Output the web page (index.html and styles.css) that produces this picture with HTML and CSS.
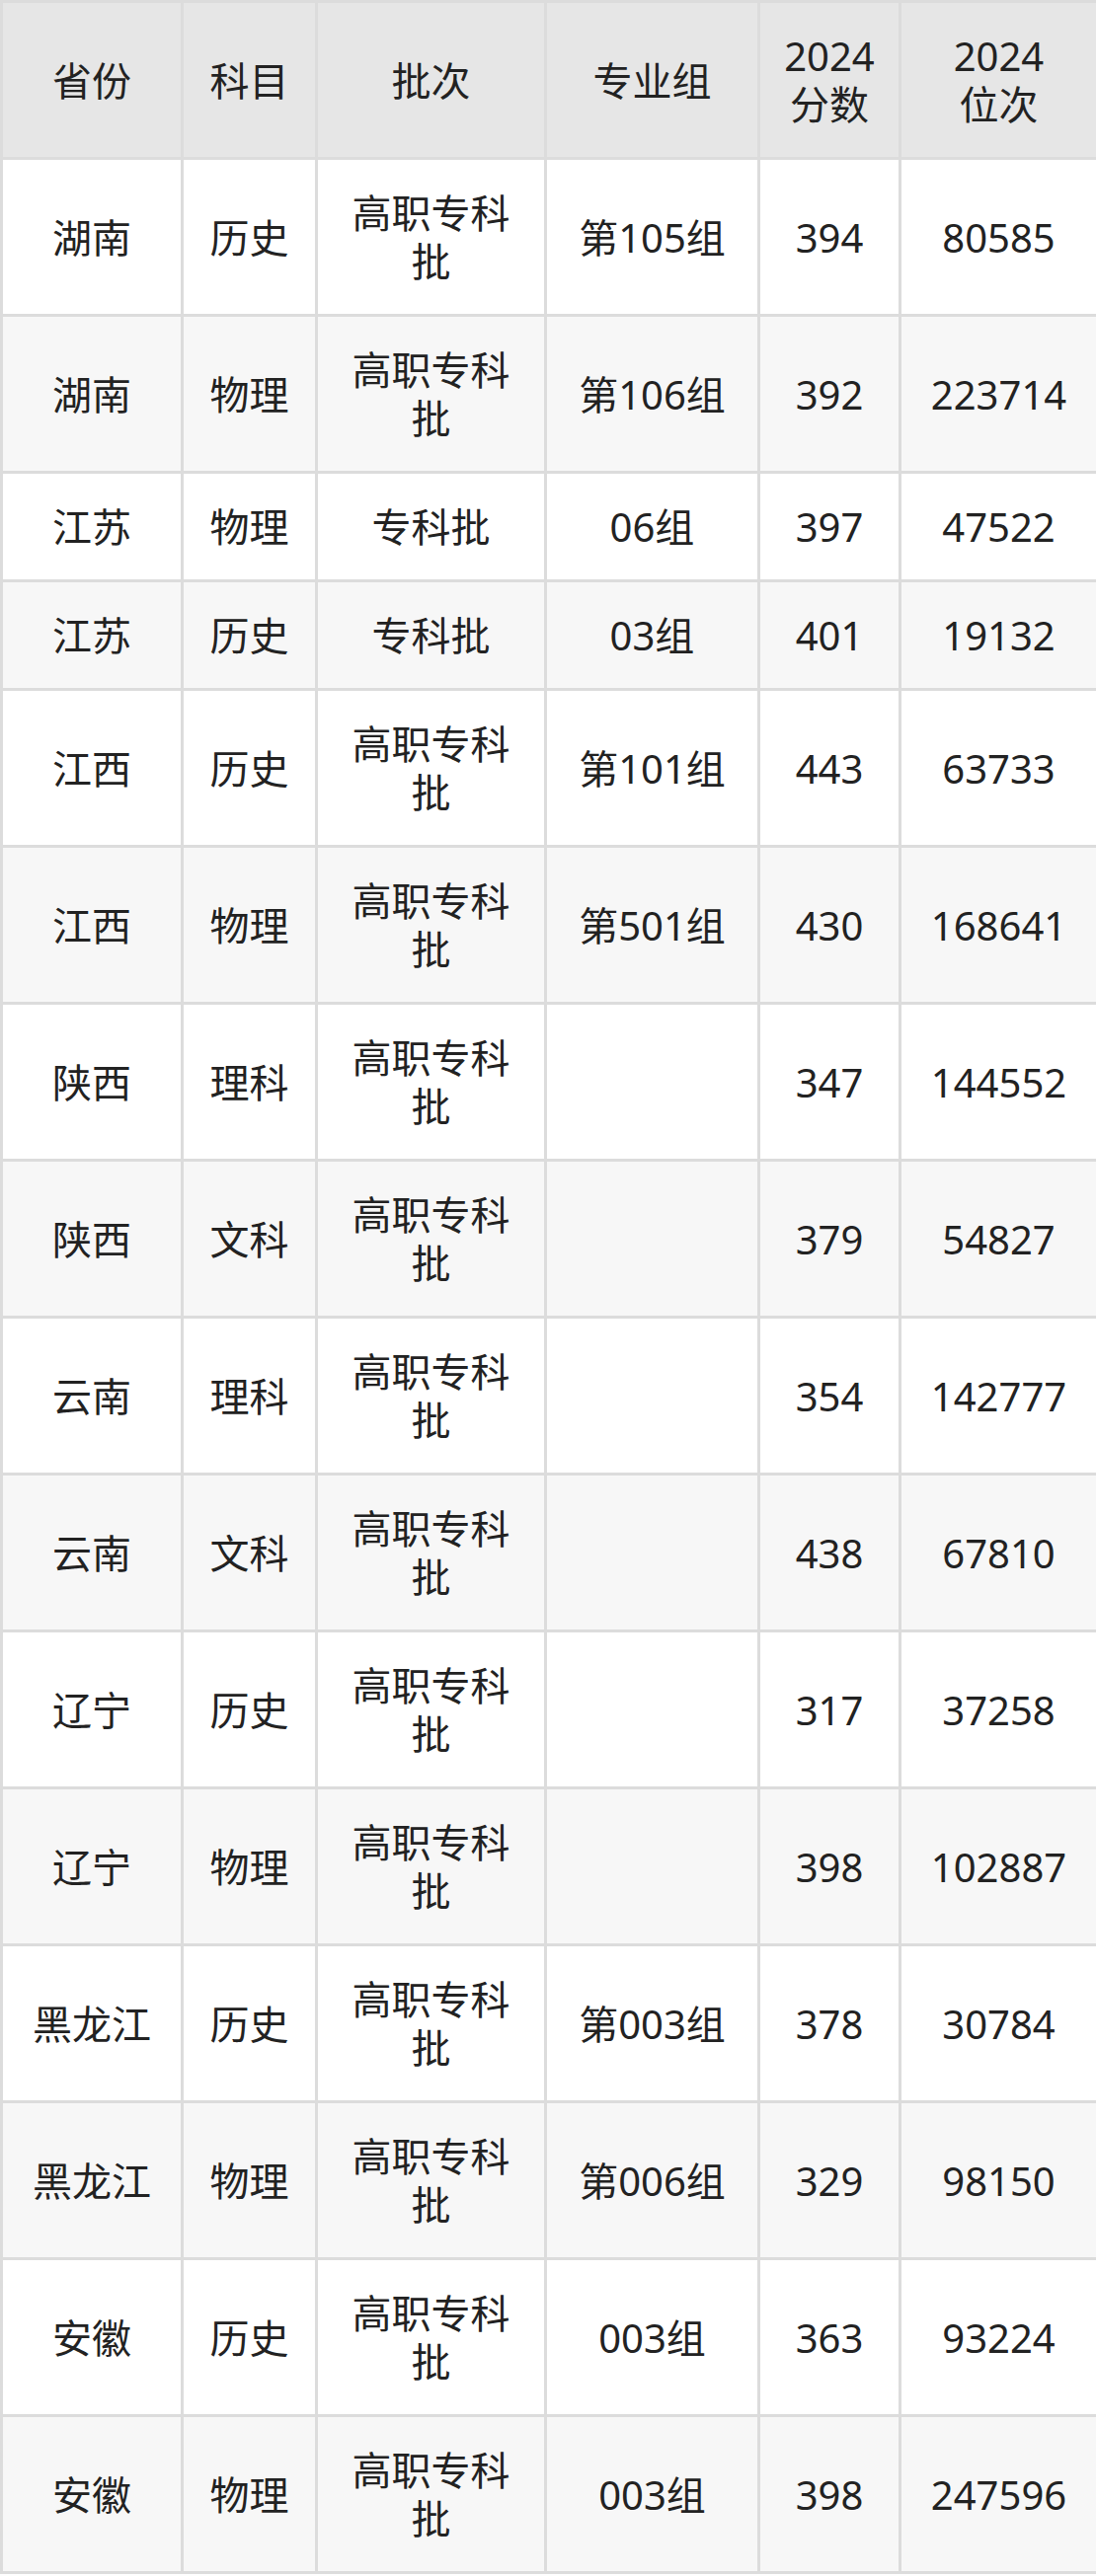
FILE: index.html
```html
<!DOCTYPE html>
<html lang="zh-CN">
<head>
<meta charset="utf-8">
<title>2024 分数位次</title>
<link rel="stylesheet" href="styles.css">
</head>
<body>
<table class="score-table">
  <colgroup>
    <col class="c-prov">
    <col class="c-subj">
    <col class="c-batch">
    <col class="c-group">
    <col class="c-score">
    <col class="c-rank">
  </colgroup>
  <thead>
    <tr><th>省份</th><th>科目</th><th>批次</th><th>专业组</th><th>2024<br>分数</th><th>2024<br>位次</th></tr>
  </thead>
  <tbody>
    <tr><td>湖南</td><td>历史</td><td>高职专科批</td><td>第105组</td><td>394</td><td>80585</td></tr>
    <tr><td>湖南</td><td>物理</td><td>高职专科批</td><td>第106组</td><td>392</td><td>223714</td></tr>
    <tr><td>江苏</td><td>物理</td><td>专科批</td><td>06组</td><td>397</td><td>47522</td></tr>
    <tr><td>江苏</td><td>历史</td><td>专科批</td><td>03组</td><td>401</td><td>19132</td></tr>
    <tr><td>江西</td><td>历史</td><td>高职专科批</td><td>第101组</td><td>443</td><td>63733</td></tr>
    <tr><td>江西</td><td>物理</td><td>高职专科批</td><td>第501组</td><td>430</td><td>168641</td></tr>
    <tr><td>陕西</td><td>理科</td><td>高职专科批</td><td></td><td>347</td><td>144552</td></tr>
    <tr><td>陕西</td><td>文科</td><td>高职专科批</td><td></td><td>379</td><td>54827</td></tr>
    <tr><td>云南</td><td>理科</td><td>高职专科批</td><td></td><td>354</td><td>142777</td></tr>
    <tr><td>云南</td><td>文科</td><td>高职专科批</td><td></td><td>438</td><td>67810</td></tr>
    <tr><td>辽宁</td><td>历史</td><td>高职专科批</td><td></td><td>317</td><td>37258</td></tr>
    <tr><td>辽宁</td><td>物理</td><td>高职专科批</td><td></td><td>398</td><td>102887</td></tr>
    <tr><td>黑龙江</td><td>历史</td><td>高职专科批</td><td>第003组</td><td>378</td><td>30784</td></tr>
    <tr><td>黑龙江</td><td>物理</td><td>高职专科批</td><td>第006组</td><td>329</td><td>98150</td></tr>
    <tr><td>安徽</td><td>历史</td><td>高职专科批</td><td>003组</td><td>363</td><td>93224</td></tr>
    <tr><td>安徽</td><td>物理</td><td>高职专科批</td><td>003组</td><td>398</td><td>247596</td></tr>
  </tbody>
</table>
</body>
</html>
```
FILE: styles.css
```css
html, body {
  margin: 0;
  padding: 0;
  background: #ffffff;
}

.score-table {
  width: 1110px;
  border-collapse: collapse;
  table-layout: fixed;
  font-family: "Noto Sans", "Noto Sans CJK SC", sans-serif;
  font-size: 40px;
  line-height: 49px;
  color: #222222;
}

.c-prov { width: 183px; }
.c-subj { width: 136px; }
.c-batch { width: 232px; }
.c-group { width: 216px; }
.c-score { width: 143px; }
.c-rank { width: 200px; }

.score-table th,
.score-table td {
  border: 3px solid #dcdcdc;
  padding: 29px 20px;
  text-align: center;
  vertical-align: middle;
  font-weight: normal;
}

.score-table thead th {
  background: #e6e6e6;
}

.score-table tbody tr:nth-child(odd) td {
  background: #ffffff;
}

.score-table tbody tr:nth-child(even) td {
  background: #f7f7f7;
}
```
